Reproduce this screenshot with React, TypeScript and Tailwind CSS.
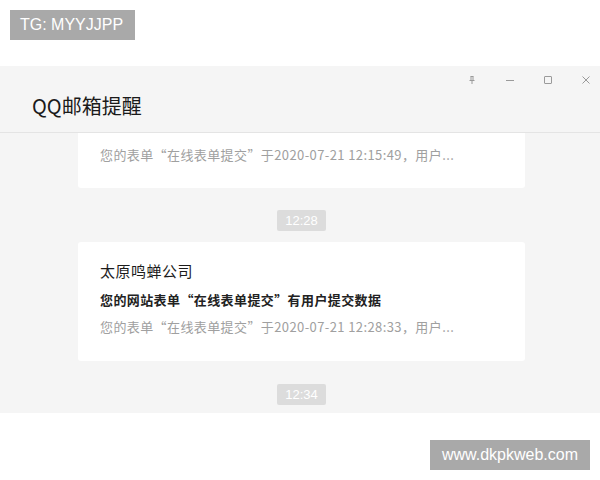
import React from "react";

const cjk = { fontFamily: '"Microsoft YaHei", "Noto Sans CJK SC", "Noto Sans", sans-serif' };
const latin = { fontFamily: '"Liberation Sans", Arial, sans-serif' };

interface Msg {
  sender: string;
  subject: string;
  preview: string;
}

const card2: Msg = {
  sender: "太原鸣蝉公司",
  subject: "您的网站表单“在线表单提交”有用户提交数据",
  preview: "您的表单“在线表单提交”于2020-07-21 12:28:33，用户...",
};

// the first card is scrolled up under the header, only its last line shows
function ScrolledCard({ preview }: { preview: string }) {
  return (
    <div className="ml-[78px] w-[447px] h-[55px] bg-white rounded-b-[3px] pl-[22px] pt-[12px] shrink-0" style={cjk}>
      <div className="text-[13px] leading-[20px] tracking-[0.4px] text-[#a0a0a0]">{preview}</div>
    </div>
  );
}

function MailCard({ msg }: { msg: Msg }) {
  return (
    <div className="ml-[78px] w-[447px] h-[119px] bg-white rounded-[3px] pl-[22px] pt-[19px] shrink-0" style={cjk}>
      <div className="text-[15px] leading-[20px] tracking-[0.5px] text-[#1c1c1c]">{msg.sender}</div>
      <div className="mt-[9px] text-[13px] leading-[20px] tracking-[0.4px] font-bold text-[#222]">{msg.subject}</div>
      <div className="mt-[7px] text-[13px] leading-[20px] tracking-[0.4px] text-[#a0a0a0]">{msg.preview}</div>
    </div>
  );
}

function TimePill({ time }: { time: string }) {
  return (
    <div className="flex justify-center pl-[3px] shrink-0">
      <div
        className="w-[49px] h-[21px] rounded-[2px] bg-[#dcdcdc] text-white text-[13px] leading-[21px] text-center"
        style={latin}
      >
        {time}
      </div>
    </div>
  );
}

function WindowControls() {
  return (
    <div className="flex items-center text-[#9a9a9a]">
      <svg width="10" height="10" viewBox="0 0 10 10" className="ml-[467px]" fill="none" stroke="currentColor" strokeWidth="1">
        <path d="M3.5 1.5h3M4 1.5v3.5M6 1.5v3.5M2.5 5.5h5M5 5.5v3.5" />
      </svg>
      <svg width="10" height="10" viewBox="0 0 10 10" className="ml-[28px]" fill="none" stroke="currentColor" strokeWidth="1">
        <path d="M1 5.5h8" />
      </svg>
      <svg width="10" height="10" viewBox="0 0 10 10" className="ml-[28px]" fill="none" stroke="currentColor" strokeWidth="1">
        <rect x="1.5" y="1.5" width="7" height="7" rx="0.5" />
      </svg>
      <svg width="10" height="10" viewBox="0 0 10 10" className="ml-[28px]" fill="none" stroke="currentColor" strokeWidth="1">
        <path d="M1.5 1.5l7 7M8.5 1.5l-7 7" />
      </svg>
    </div>
  );
}

export default function App() {
  return (
    <div className="w-[600px] h-[480px] bg-white flex flex-col overflow-hidden">
      <div className="h-[66px] pt-[10px] pl-[10px]">
        <div className="w-[125px] h-[30px] bg-[#a9a9a9] text-white text-[16px] leading-[30px] pl-[10px]" style={latin}>
          TG: MYYJJPP
        </div>
      </div>

      <div className="h-[347px] bg-[#f5f5f5] flex flex-col">
        <div className="h-[67px] border-b border-[#e4e4e4] shrink-0">
          <div className="pt-[9px]">
            <WindowControls />
          </div>
          <div className="pl-[32px] mt-[8px] text-[20px] leading-[26px] text-[#1a1a1a]" style={cjk}>
            QQ邮箱提醒
          </div>
        </div>
        <div className="flex-1 overflow-hidden">
          <div className="flex flex-col">
            <ScrolledCard preview="您的表单“在线表单提交”于2020-07-21 12:15:49，用户..." />
            <div className="h-[22px]" />
            <TimePill time="12:28" />
            <div className="h-[11px]" />
            <MailCard msg={card2} />
            <div className="h-[23px]" />
            <TimePill time="12:34" />
          </div>
        </div>
      </div>

      <div className="flex justify-end pr-[10px] pt-[27px]">
        <div className="w-[160px] h-[30px] bg-[#a9a9a9] text-white text-[16px] leading-[30px] text-center" style={latin}>
          www.dkpkweb.com
        </div>
      </div>
    </div>
  );
}
